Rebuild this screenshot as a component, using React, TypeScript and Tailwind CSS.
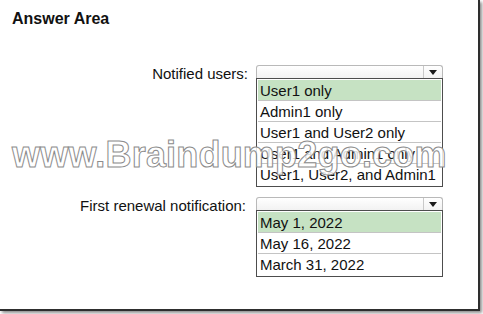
import React from "react";

const Combo = ({ options }: { options: string[] }) => {
  return (
    <div className="w-[187px]">
      <div className="flex h-[13px] rounded-t-[3px] border border-b-0 border-[#b9b9b9] bg-gradient-to-b from-white to-[#f2f2f2]">
        <div className="flex-1" />
        <div className="flex w-[19px] items-center justify-center border-l border-[#c9c9c9]">
          <svg width="8" height="5" viewBox="0 0 8 5">
            <polygon points="0,0 8,0 4,5" fill="#1a1a1a" />
          </svg>
        </div>
      </div>
      <div className="border border-[#4d4d4d] bg-white p-px">
        {options.map((o, i) => (
          <div
            key={o}
            className={
              "flex h-[21px] items-center border-b border-[#c4c4c4] px-[2px] text-[15px] leading-none text-[#111] last:border-b-0 " +
              (i === 0 ? "bg-[#c6e2c3]" : "")
            }
          >
            {o}
          </div>
        ))}
      </div>
    </div>
  );
};

const App = () => {
  return (
    <div className="relative h-[314px] w-[483px] bg-white font-['Liberation_Sans',Arial,sans-serif]">
      <div className="h-[311px] w-[480px] border-b-2 border-r-2 border-[#2e2e2e] pl-[12px] pt-[10px] shadow-[2px_2px_3px_rgba(0,0,0,0.45)]">
        <h1 className="text-[16px] font-bold leading-[18px] text-[#111]">Answer Area</h1>

        <div className="mt-[37px] flex">
          <div className="mt-[1px] w-[236px] text-right text-[15px] leading-[15px] text-[#111]">
            Notified users:
          </div>
          <div className="ml-[8px]">
            <Combo
              options={[
                "User1 only",
                "Admin1 only",
                "User1 and User2 only",
                "User1 and Admin1 only",
                "User1, User2, and Admin1",
              ]}
            />
          </div>
        </div>

        <div className="mt-[10px] flex">
          <div className="mt-[1px] w-[234px] text-right text-[15px] leading-[15px] text-[#111]">
            First renewal notification:
          </div>
          <div className="ml-[10px]">
            <Combo options={["May 1, 2022", "May 16, 2022", "March 31, 2022"]} />
          </div>
        </div>
      </div>

      <div className="pointer-events-none absolute left-[12px] top-[137px] text-[36px] font-bold leading-none tracking-[0.2px] text-[rgba(255,255,255,0.85)] [-webkit-text-stroke:1px_#8c8c8c]">
        www.Braindump2go.com
      </div>
    </div>
  );
};

export default App;
